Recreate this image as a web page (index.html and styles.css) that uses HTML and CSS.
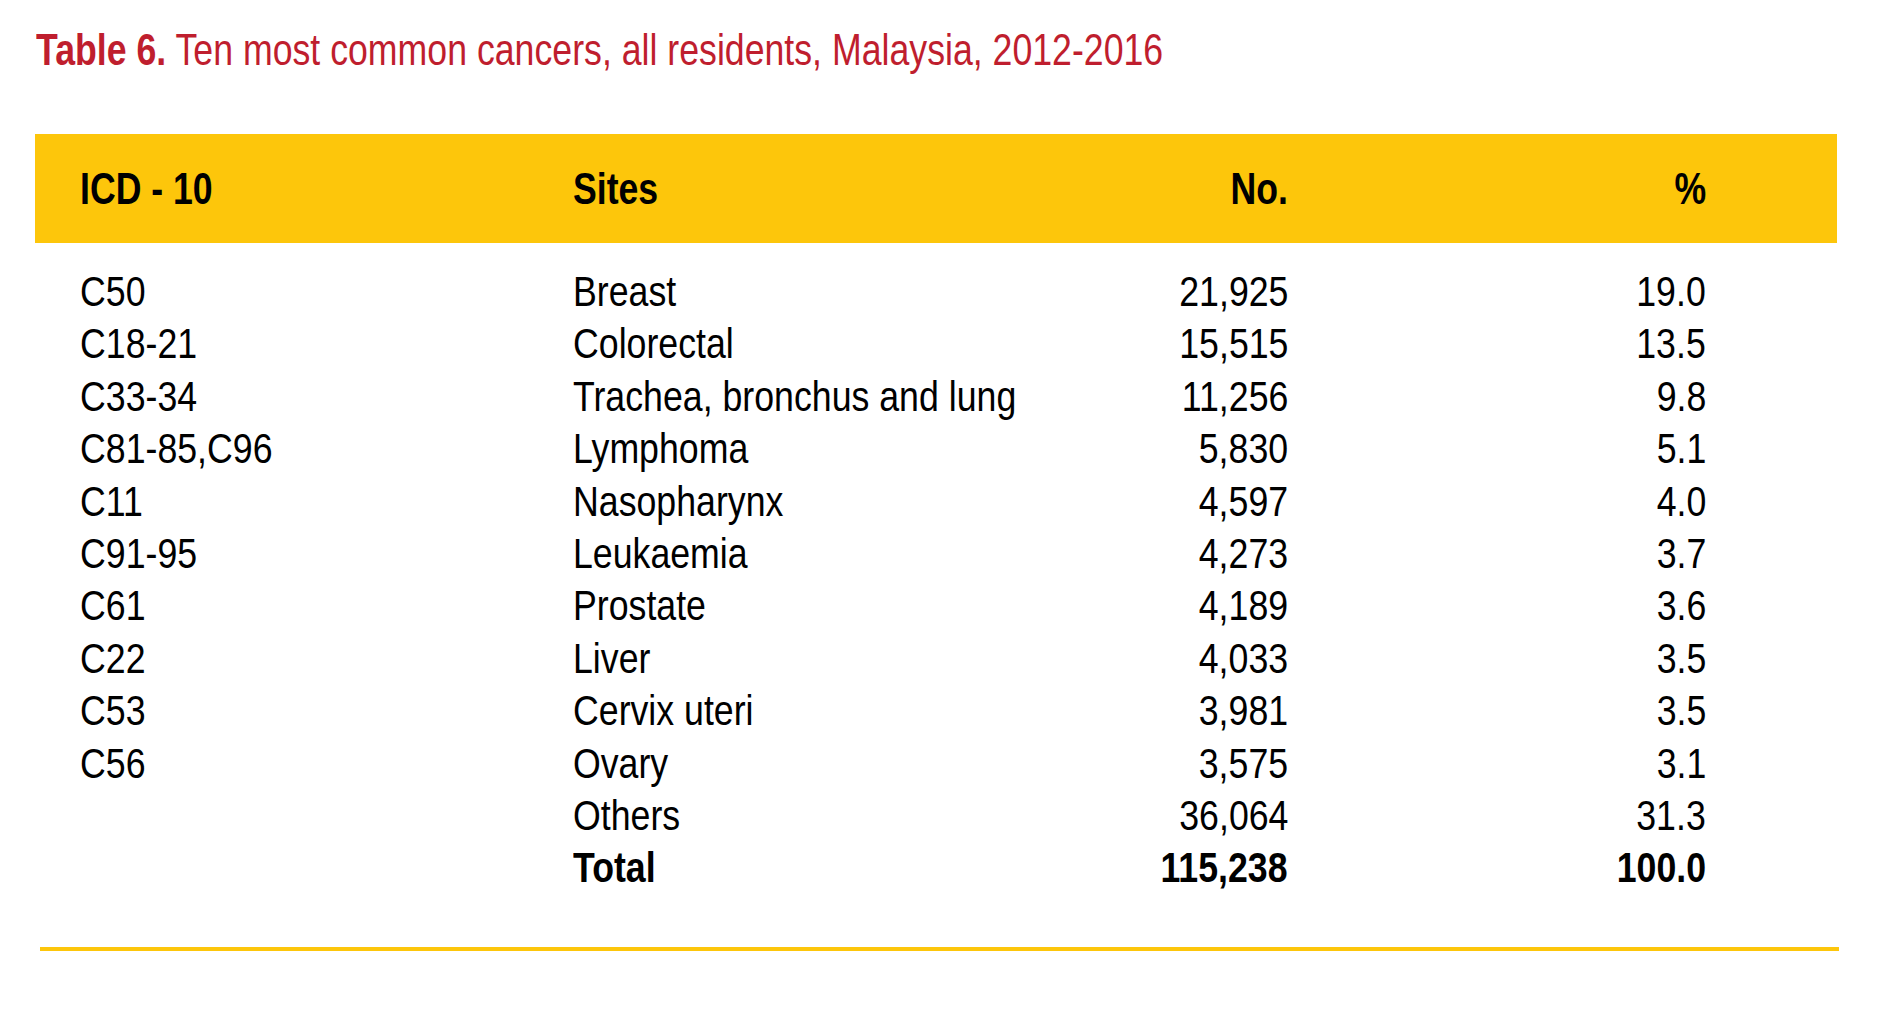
FILE: index.html
```html
<!DOCTYPE html>
<html lang="en">
<head>
<meta charset="utf-8">
<title>Table 6</title>
<link rel="stylesheet" href="styles.css">
</head>
<body>
<div class="page">
  <h1 class="title"><span class="t"><span class="label">Table 6.</span> Ten most common cancers, all residents, Malaysia, 2012-2016</span></h1>
  <div class="table">
    <div class="row head">
      <div class="c icd"><span class="t">ICD - 10</span></div>
      <div class="c site"><span class="t">Sites</span></div>
      <div class="c num"><span class="t">No.</span></div>
      <div class="c pct"><span class="t">%</span></div>
    </div>
    <div class="body">
      <div class="row"><div class="c icd"><span class="t">C50</span></div><div class="c site"><span class="t">Breast</span></div><div class="c num"><span class="t">21,925</span></div><div class="c pct"><span class="t">19.0</span></div></div>
      <div class="row"><div class="c icd"><span class="t">C18-21</span></div><div class="c site"><span class="t">Colorectal</span></div><div class="c num"><span class="t">15,515</span></div><div class="c pct"><span class="t">13.5</span></div></div>
      <div class="row"><div class="c icd"><span class="t">C33-34</span></div><div class="c site"><span class="t">Trachea, bronchus and lung</span></div><div class="c num"><span class="t">11,256</span></div><div class="c pct"><span class="t">9.8</span></div></div>
      <div class="row"><div class="c icd"><span class="t">C81-85,C96</span></div><div class="c site"><span class="t">Lymphoma</span></div><div class="c num"><span class="t">5,830</span></div><div class="c pct"><span class="t">5.1</span></div></div>
      <div class="row"><div class="c icd"><span class="t">C11</span></div><div class="c site"><span class="t">Nasopharynx</span></div><div class="c num"><span class="t">4,597</span></div><div class="c pct"><span class="t">4.0</span></div></div>
      <div class="row"><div class="c icd"><span class="t">C91-95</span></div><div class="c site"><span class="t">Leukaemia</span></div><div class="c num"><span class="t">4,273</span></div><div class="c pct"><span class="t">3.7</span></div></div>
      <div class="row"><div class="c icd"><span class="t">C61</span></div><div class="c site"><span class="t">Prostate</span></div><div class="c num"><span class="t">4,189</span></div><div class="c pct"><span class="t">3.6</span></div></div>
      <div class="row"><div class="c icd"><span class="t">C22</span></div><div class="c site"><span class="t">Liver</span></div><div class="c num"><span class="t">4,033</span></div><div class="c pct"><span class="t">3.5</span></div></div>
      <div class="row"><div class="c icd"><span class="t">C53</span></div><div class="c site"><span class="t">Cervix uteri</span></div><div class="c num"><span class="t">3,981</span></div><div class="c pct"><span class="t">3.5</span></div></div>
      <div class="row"><div class="c icd"><span class="t">C56</span></div><div class="c site"><span class="t">Ovary</span></div><div class="c num"><span class="t">3,575</span></div><div class="c pct"><span class="t">3.1</span></div></div>
      <div class="row"><div class="c icd"></div><div class="c site"><span class="t">Others</span></div><div class="c num"><span class="t">36,064</span></div><div class="c pct"><span class="t">31.3</span></div></div>
      <div class="row total"><div class="c icd"></div><div class="c site"><span class="t">Total</span></div><div class="c num"><span class="t">115,238</span></div><div class="c pct"><span class="t">100.0</span></div></div>
    </div>
  </div>
  <div class="rule"></div>
</div>
</body>
</html>
```
FILE: styles.css
```css
html, body {
  margin: 0;
  padding: 0;
  background: #ffffff;
}

.page {
  font-family: "Liberation Sans", Arial, sans-serif;
  color: #000;
  padding: 28px 0 0 35px;
  width: 1802px;
}

.t {
  display: inline-block;
  white-space: nowrap;
  transform: scaleX(0.85);
  transform-origin: left center;
}

.title {
  margin: 0 0 62px 1px;
  font-size: 44px;
  line-height: 44px;
  font-weight: normal;
  color: #bf1e2e;
  white-space: nowrap;
}

.title .t {
  transform: scaleX(0.811);
}

.title .label {
  font-weight: bold;
}

.row {
  display: grid;
  grid-template-columns: 493px 527px 188px 418px;
  padding-left: 45px;
  padding-right: 131px;
  align-items: center;
}

.head {
  background: #fdc60b;
  height: 109px;
  font-size: 44px;
  line-height: 44px;
  font-weight: bold;
}

.head .t {
  transform: scaleX(0.81);
}

.body {
  padding-top: 23px;
}

.body .row {
  font-size: 42px;
  line-height: 52.4px;
  height: 52.4px;
}

.c {
  white-space: nowrap;
}

.num, .pct {
  text-align: right;
}

.num .t, .pct .t {
  transform-origin: right center;
}

.total {
  font-weight: bold;
}

.rule {
  margin: 52px 0 0 5px;
  width: 1799px;
  height: 4px;
  background: #fdc60b;
}
```
